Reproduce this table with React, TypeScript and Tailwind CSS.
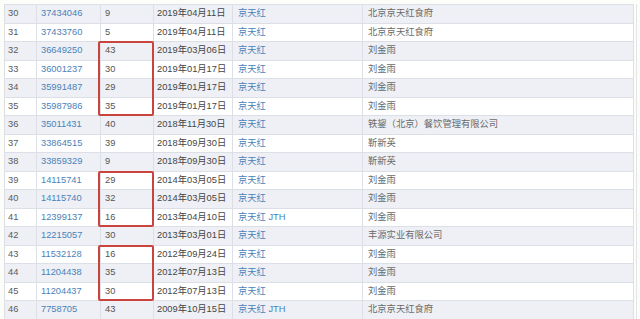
import React from 'react';

type Row = {
    no: number;
    reg: string;
    cls: string;
    date: string;
    mark: string;
    owner: string;
};

const rows: Row[] = [
    { no: 30, reg: '37434046', cls: '9', date: '2019年04月11日', mark: '京天红', owner: '北京京天红食府' },
    { no: 31, reg: '37433760', cls: '5', date: '2019年04月11日', mark: '京天红', owner: '北京京天红食府' },
    { no: 32, reg: '36649250', cls: '43', date: '2019年03月06日', mark: '京天红', owner: '刘金雨' },
    { no: 33, reg: '36001237', cls: '30', date: '2019年01月17日', mark: '京天红', owner: '刘金雨' },
    { no: 34, reg: '35991487', cls: '29', date: '2019年01月17日', mark: '京天红', owner: '刘金雨' },
    { no: 35, reg: '35987986', cls: '35', date: '2019年01月17日', mark: '京天红', owner: '刘金雨' },
    { no: 36, reg: '35011431', cls: '40', date: '2018年11月30日', mark: '京天红', owner: '铁鋆（北京）餐饮管理有限公司' },
    { no: 37, reg: '33864515', cls: '39', date: '2018年09月30日', mark: '京天红', owner: '靳新英' },
    { no: 38, reg: '33859329', cls: '9', date: '2018年09月30日', mark: '京天红', owner: '靳新英' },
    { no: 39, reg: '14115741', cls: '29', date: '2014年03月05日', mark: '京天红', owner: '刘金雨' },
    { no: 40, reg: '14115740', cls: '32', date: '2014年03月05日', mark: '京天红', owner: '刘金雨' },
    { no: 41, reg: '12399137', cls: '16', date: '2013年04月10日', mark: '京天红 JTH', owner: '刘金雨' },
    { no: 42, reg: '12215057', cls: '30', date: '2013年03月01日', mark: '京天红', owner: '丰源实业有限公司' },
    { no: 43, reg: '11532128', cls: '16', date: '2012年09月24日', mark: '京天红', owner: '刘金雨' },
    { no: 44, reg: '11204438', cls: '35', date: '2012年07月13日', mark: '京天红', owner: '刘金雨' },
    { no: 45, reg: '11204437', cls: '30', date: '2012年07月13日', mark: '京天红', owner: '刘金雨' },
    { no: 46, reg: '7758705', cls: '43', date: '2009年10月15日', mark: '京天红 JTH', owner: '北京京天红食府' },
];

const cell = 'flex items-center border-r border-b border-[#dcdfe6] pl-[3px] whitespace-nowrap overflow-hidden';
const box = 'col-start-3 -ml-[3px] -mt-[1px] border-2 border-[#c8443c] rounded-[2px]';

const App: React.FC = () => {
    return (
        <div
            className="w-[640px] h-[319px] overflow-hidden bg-[#fcfcf8] pl-[4px] pt-[4px]"
            style={{ fontFamily: '"Liberation Sans", "Noto Sans CJK SC", sans-serif' }}
        >
            <div className="w-[633px] border-r border-[#e2e4ea] pr-[3px]">
                {/* table and highlight layer share one grid cell */}
                <div className="grid">
                    <div className="[grid-area:1/1] grid grid-cols-[32px_64px_53px_79px_130px_271px] auto-rows-[18.5px] border-l border-t border-[#dcdfe6] text-[9.3px] leading-none">
                        {rows.map((r, i) => {
                            const bg = i % 2 === 0 ? 'bg-[#eef0f5]' : 'bg-white';
                            return (
                                <React.Fragment key={r.no}>
                                    <div className={`${cell} ${bg} text-[#5a5a5a]`}>{r.no}</div>
                                    <div className={`${cell} ${bg} text-[#4a82b8] pl-[4px]`}>{r.reg}</div>
                                    <div className={`${cell} ${bg} text-[#555] pl-[4px]`}>{r.cls}</div>
                                    <div className={`${cell} ${bg} text-[#444]`}>{r.date}</div>
                                    <div className={`${cell} ${bg} text-[#4a82b8] pl-[5px]`}>{r.mark}</div>
                                    <div className={`${cell} ${bg} text-[#6a6a6a] pl-[5px]`}>{r.owner}</div>
                                </React.Fragment>
                            );
                        })}
                    </div>
                    <div className="[grid-area:1/1] grid grid-cols-[32px_64px_53px_79px_130px_271px] auto-rows-[18.5px] border-l border-t border-transparent pointer-events-none">
                        <div className={`${box} row-start-3 row-span-4`} />
                        <div className={`${box} row-start-10 row-span-3`} />
                        <div className={`${box} row-start-14 row-span-3`} />
                    </div>
                </div>
            </div>
        </div>
    );
};

export default App;
